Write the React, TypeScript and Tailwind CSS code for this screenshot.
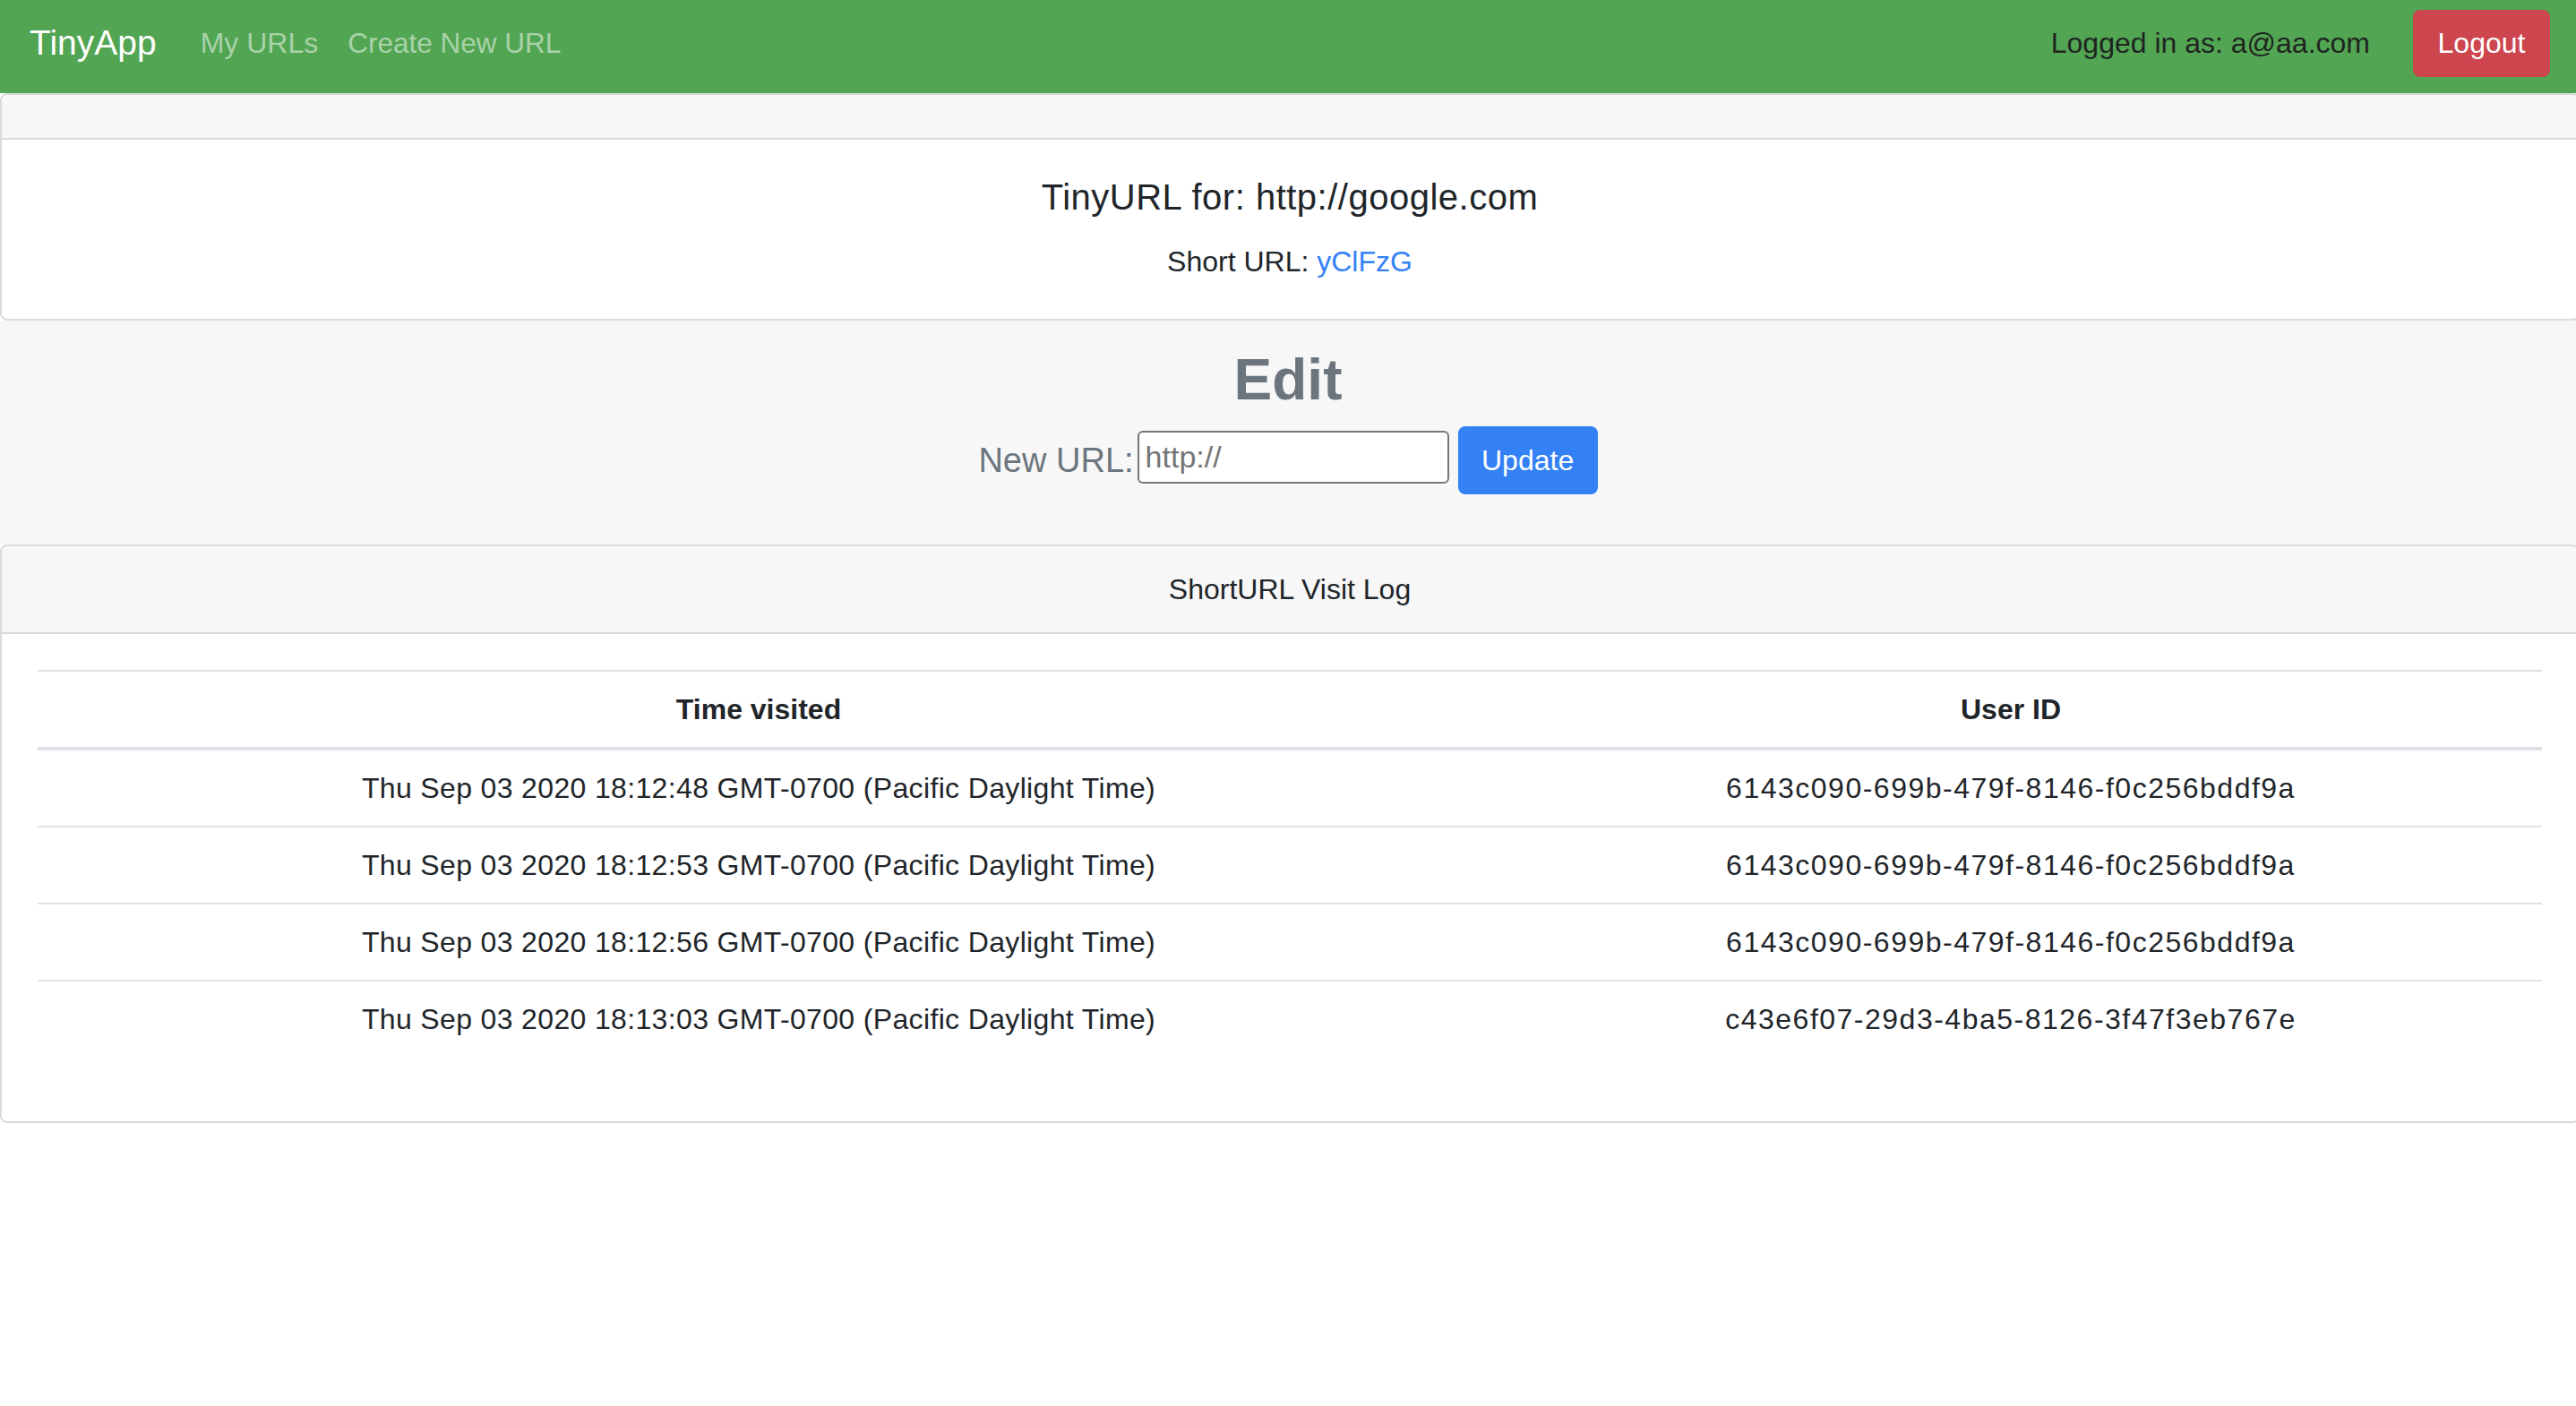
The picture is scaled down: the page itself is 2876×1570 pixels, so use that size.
import React from "react";

const rows = [
  ["Thu Sep 03 2020 18:12:48 GMT-0700 (Pacific Daylight Time)", "6143c090-699b-479f-8146-f0c256bddf9a"],
  ["Thu Sep 03 2020 18:12:53 GMT-0700 (Pacific Daylight Time)", "6143c090-699b-479f-8146-f0c256bddf9a"],
  ["Thu Sep 03 2020 18:12:56 GMT-0700 (Pacific Daylight Time)", "6143c090-699b-479f-8146-f0c256bddf9a"],
  ["Thu Sep 03 2020 18:13:03 GMT-0700 (Pacific Daylight Time)", "c43e6f07-29d3-4ba5-8126-3f47f3eb767e"],
];

export default function App() {
  return (
    <div className="min-h-screen overflow-hidden bg-white text-[#212529] font-['Liberation_Sans',Arial,sans-serif] text-[32px] leading-[48px]">
      <nav className="h-[104px] bg-[#52a552] flex items-center justify-between pl-[33px] pr-[29px] pb-[8px]">
        <div className="flex items-center">
          <span className="text-[39px] text-white leading-[60px]">TinyApp</span>
          <a className="ml-[49px] text-[#a9d2a9]">My URLs</a>
          <a className="ml-[33px] text-[#a9d2a9] text-[31.5px]">Create New URL</a>
        </div>
        <div className="flex items-center">
          <span className="text-[#1f2421]">Logged in as: a@aa.com</span>
          <button className="ml-[48px] w-[153px] h-[75px] rounded-[8px] bg-[#cd454d] text-white text-[32px]">
            Logout
          </button>
        </div>
      </nav>

      <div className="w-[calc(100%+4px)] border-2 border-[#dadada] rounded-[8px] bg-white">
        <div className="h-[50px] bg-[#f7f7f7] border-b-2 border-[#dadada] rounded-t-[6px]"></div>
        <div className="p-10 text-center">
          <h5 className="text-[40px] leading-[48px] font-medium tracking-[0.5px] mb-6">TinyURL for: http://google.com</h5>
          <p>
            Short URL: <a className="text-[#3381f5]">yClFzG</a>
          </p>
        </div>
      </div>

      <div className="bg-[#f7f7f7] flex flex-col items-center pt-[28px] pb-[56px]">
        <h2 className="text-[64px] leading-[77px] font-bold text-[#6c757d] mb-[13px]">Edit</h2>
        <div className="flex items-center">
          <label className="text-[38px] font-medium text-[#6c757d] leading-[48px]">New URL:</label>
          <input
            className="ml-[4px] mb-[8px] w-[348px] h-[59px] border-2 border-[#767676] rounded-[6px] bg-white px-[7px] text-[34px] placeholder:text-[#757575] outline-none"
            placeholder="http://"
          />
          <button className="ml-[10px] w-[156px] h-[76px] rounded-[8px] bg-[#3381f5] text-white text-[32px]">
            Update
          </button>
        </div>
      </div>

      <div className="w-[calc(100%+4px)] border-2 border-[#dadada] rounded-[8px] bg-white">
        <div className="bg-[#f7f7f7] border-b-2 border-[#dadada] rounded-t-[6px] py-6 text-center">
          ShortURL Visit Log
        </div>
        <div className="p-10">
          <table className="w-full table-fixed border-collapse mb-8">
            <thead>
              <tr className="border-t-2 border-[#dee2e6]">
                <th className="w-[1610px] py-[18px] font-bold text-center border-b-4 border-[#dee2e6]">Time visited</th>
                <th className="py-[18px] font-bold text-center border-b-4 border-[#dee2e6]">User ID</th>
              </tr>
            </thead>
            <tbody>
              {rows.map((r, i) => (
                <tr key={i} className={i === 0 ? "" : "border-t-2 border-[#dee2e6]"}>
                  <td className="py-[18px] text-center tracking-[0.35px]">{r[0]}</td>
                  <td className="py-[18px] text-center tracking-[1.5px]">{r[1]}</td>
                </tr>
              ))}
            </tbody>
          </table>
        </div>
      </div>
    </div>
  );
}
